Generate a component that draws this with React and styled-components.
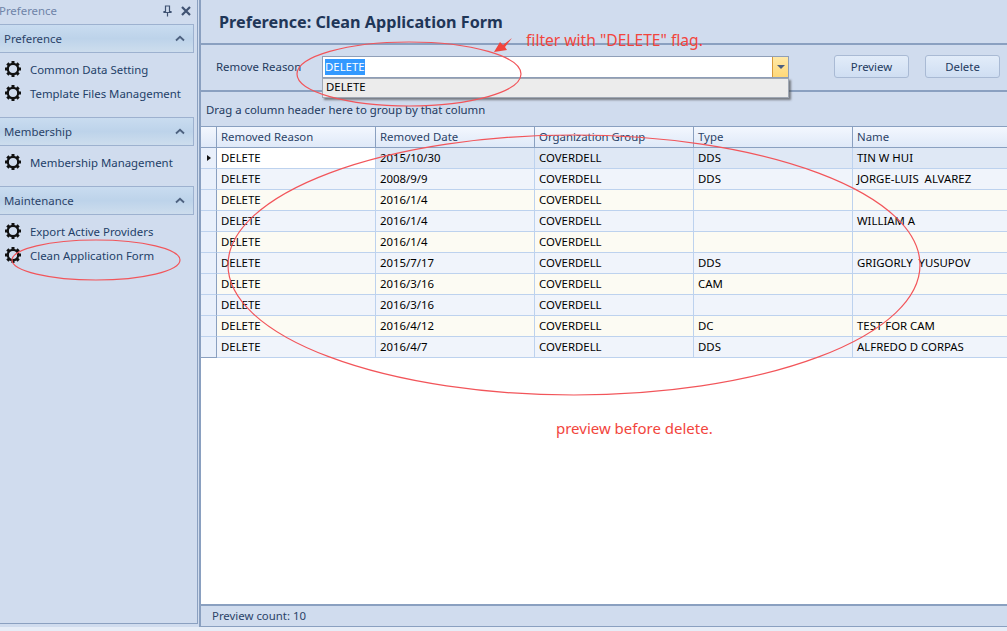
import styled, { createGlobalStyle } from "styled-components";

const GlobalStyle = createGlobalStyle`
  html, body {
    margin: 0;
    padding: 0;
    background: #e6edf7;
    overflow: hidden;
  }
  * { box-sizing: border-box; }
`;

const FONT = `"Noto Sans", "Open Sans", sans-serif`;
const LINE = "#8aa0c0";

const Page = styled.div`
  position: relative;
  width: 1007px;
  height: 631px;
  font-family: ${FONT};
  font-size: 11.4px;
  color: #233a5e;
  background: #e6edf7;
  overflow: hidden;
`;

const Body = styled.div`
  display: flex;
  height: 627px;
  background: #d0dcee;
`;

const Sidebar = styled.aside`
  width: 198px;
  height: 624px;
  flex: none;
  border-right: 1px solid ${LINE};
  border-bottom: 1px solid ${LINE};
  display: flex;
  flex-direction: column;
`;

const SideTitle = styled.div`
  height: 24px;
  display: flex;
  align-items: center;
  padding: 0 6px 3px 0;
  margin-left: -1px;
  color: #6f84a8;
  justify-content: space-between;
`;

const TitleIcons = styled.div`
  display: flex;
  align-items: center;
  gap: 9px;
`;

const SectionHead = styled.div`
  width: 194px;
  height: 29px;
  border: 1px solid #9db1cf;
  border-left: none;
  background: linear-gradient(#c9dcf0, #bdd3ea 50%, #cddded);
  display: flex;
  align-items: center;
  justify-content: space-between;
  padding: 0 8px 1px 4px;
  color: #2b4368;
`;

const SectionItems = styled.div`
  display: flex;
  flex-direction: column;
  gap: 2px;
  padding: 5px 0 0 4px;
  height: ${(p) => p.$height}px;
`;

const Item = styled.div`
  height: 22px;
  display: flex;
  align-items: center;
  gap: 8px;
  color: #233f68;
  white-space: nowrap;
`;

const Main = styled.main`
  flex: 1;
  margin-left: 1px;
  min-width: 0;
  height: 627px;
  display: flex;
  flex-direction: column;
  border-left: 2px solid ${LINE};
`;

const TitleBar = styled.div`
  height: 45px;
  flex: none;
  display: flex;
  align-items: center;
  padding: 0 0 0 18px;
  font-size: 16.2px;
  font-weight: 700;
  color: #1f3658;
  border-bottom: 2px solid ${LINE};
`;

const FilterBar = styled.div`
  height: 47px;
  flex: none;
  display: flex;
  align-items: center;
  padding: 0 8px 2px 15px;
  border-bottom: 2px solid ${LINE};
`;

const FilterLabel = styled.div`
  width: 106px;
  flex: none;
`;

const Combo = styled.div`
  position: relative;
  width: 467px;
  height: 22px;
  flex: none;
  margin: 1px 45px 0 0;
  display: flex;
  background: #fff;
  border: 1px solid #8f9fb8;
`;

const ComboText = styled.div`
  flex: 1;
  padding: 2px 0 0 2px;
`;

const Selected = styled.span`
  display: inline-block;
  height: 16px;
  line-height: 16px;
  background: #3399ff;
  color: #fff;
`;

const ComboButton = styled.div`
  width: 16px;
  background: linear-gradient(#ffe9a8, #ffd878);
  border-left: 1px solid #d89a3c;
  display: flex;
  align-items: center;
  justify-content: center;
`;

const Caret = styled.span`
  width: 0;
  height: 0;
  border-left: 4px solid transparent;
  border-right: 4px solid transparent;
  border-top: 4px solid #4c5f80;
`;

const Dropdown = styled.div`
  position: absolute;
  left: -1px;
  top: 21px;
  width: 467px;
  height: 20px;
  padding: 0 0 0 3px;
  background: #ececec;
  border: 1px solid #a0a8b4;
  box-shadow: 2px 2px 2px rgba(60, 60, 60, 0.6);
  color: #000;
  z-index: 2;
`;

const Button = styled.button`
  width: 75px;
  height: 23px;
  flex: none;
  margin-right: 16px;
  padding: 0 0 1px;
  font: inherit;
  color: #233a5e;
  border: 1px solid #a9bad4;
  border-radius: 3px;
  background: linear-gradient(#e2ecf9, #cfdef2);
`;

const GroupPanel = styled.div`
  height: 34px;
  flex: none;
  display: flex;
  align-items: center;
  padding: 0 0 0 5px;
  color: #233a5e;
`;

const Grid = styled.div`
  flex: 1;
  min-height: 0;
  background: #fff;
`;

const Row = styled.div`
  display: grid;
  grid-template-columns: 16px repeat(4, 159px) 1fr;
  height: ${(p) => (p.$head ? 22 : 21)}px;
`;

const HeadCell = styled.div`
  display: flex;
  align-items: center;
  padding: 0 0 2px 4px;
  background: linear-gradient(#f3f7fe, #dfe9f8);
  border-top: 1px solid ${LINE};
  border-bottom: 1px solid ${LINE};
  border-right: 1px solid ${LINE};
  color: #2b4368;
  &:last-child { border-right: none; }
`;

const Indicator = styled.div`
  display: flex;
  align-items: center;
  justify-content: center;
  background: #e9f0fb;
  border-right: 1px solid ${LINE};
  border-bottom: 1px solid ${(p) => (p.$last ? LINE : "#bdd2ee")};
`;

const RowArrow = styled.span`
  width: 0;
  height: 0;
  border-top: 3.5px solid transparent;
  border-bottom: 3.5px solid transparent;
  border-left: 4px solid #111;
`;

const Cell = styled.div`
  display: flex;
  align-items: center;
  padding: 0 0 2px 4px;
  white-space: pre;
  color: #000;
  background: ${(p) => p.$bg};
  border-right: 1px solid #bdd2ee;
  border-bottom: 1px solid #bdd2ee;
  &:last-child { border-right: none; }
`;

const StatusBar = styled.div`
  height: 23px;
  flex: none;
  display: flex;
  align-items: center;
  padding: 0 0 2px 11px;
  border-top: 2px solid ${LINE};
  border-bottom: 1px solid ${LINE};
  color: #2b4368;
`;

const Overlay = styled.svg`
  position: absolute;
  left: 0;
  top: 0;
  pointer-events: none;
  z-index: 3;
`;

const Note = styled.div`
  position: absolute;
  left: ${(p) => p.$x}px;
  top: ${(p) => p.$y}px;
  font-size: ${(p) => p.$size}px;
  line-height: 20px;
  white-space: nowrap;
  color: #f2453d;
  z-index: 4;
`;

function Gear() {
  const teeth = [0, 45, 90, 135, 180, 225, 270, 315];
  return (
    <svg width="18" height="18" viewBox="0 0 18 18" style={{ flex: "none" }}>
      {teeth.map((a) => (
        <rect key={a} x="7.5" y="1" width="3" height="3.5" fill="#111" transform={`rotate(${a} 9 9)`} />
      ))}
      <circle cx="9" cy="9" r="5.2" fill="none" stroke="#111" strokeWidth="2.2" />
    </svg>
  );
}

function Chevron() {
  return (
    <svg width="10" height="7" viewBox="0 0 10 7">
      <path d="M1 5.5 L5 1.8 L9 5.5" fill="none" stroke="#4d617f" strokeWidth="1.8" />
    </svg>
  );
}

const sections = [
  { title: "Preference", height: 64, items: ["Common Data Setting", "Template Files Management"] },
  { title: "Membership", height: 40, items: ["Membership Management"] },
  { title: "Maintenance", height: 64, items: ["Export Active Providers", "Clean Application Form"] },
];

const columns = ["Removed Reason", "Removed Date", "Organization Group", "Type", "Name"];

const rows = [
  ["2015/10/30", "DDS", "TIN W HUI"],
  ["2008/9/9", "DDS", "JORGE-LUIS  ALVAREZ"],
  ["2016/1/4", "", ""],
  ["2016/1/4", "", "WILLIAM A"],
  ["2016/1/4", "", ""],
  ["2015/7/17", "DDS", "GRIGORLY  YUSUPOV"],
  ["2016/3/16", "CAM", ""],
  ["2016/3/16", "", ""],
  ["2016/4/12", "DC", "TEST FOR CAM"],
  ["2016/4/7", "DDS", "ALFREDO D CORPAS"],
];

function rowColor(i) {
  if (i === 0) return "#dfe8f5";
  return i % 2 === 0 ? "#fcfbf3" : "#f0f4fb";
}

export default function App() {
  return (
    <Page>
      <GlobalStyle />
      <Body>
        <Sidebar>
          <SideTitle>
            Preference
            <TitleIcons>
              <svg width="9" height="12" viewBox="0 0 9 12">
                <path d="M2.5 1H6.5V6.5H8V7.5H1V6.5H2.5Z M4.5 7.5V11.5" fill="none" stroke="#3f5272" strokeWidth="1.2" />
              </svg>
              <svg width="10" height="10" viewBox="0 0 10 10">
                <path d="M1 1L9 9M9 1L1 9" stroke="#3f5272" strokeWidth="2.2" />
              </svg>
            </TitleIcons>
          </SideTitle>
          {sections.map((s) => (
            <div key={s.title}>
              <SectionHead>
                {s.title}
                <Chevron />
              </SectionHead>
              <SectionItems $height={s.height}>
                {s.items.map((name) => (
                  <Item key={name}>
                    <Gear />
                    {name}
                  </Item>
                ))}
              </SectionItems>
            </div>
          ))}
        </Sidebar>
        <Main>
          <TitleBar>Preference: Clean Application Form</TitleBar>
          <FilterBar>
            <FilterLabel>Remove Reason</FilterLabel>
            <Combo>
              <ComboText>
                <Selected>DELETE</Selected>
              </ComboText>
              <ComboButton>
                <Caret />
              </ComboButton>
              <Dropdown>DELETE</Dropdown>
            </Combo>
            <Button>Preview</Button>
            <Button>Delete</Button>
          </FilterBar>
          <GroupPanel>Drag a column header here to group by that column</GroupPanel>
          <Grid>
            <Row $head>
              <HeadCell />
              {columns.map((c) => (
                <HeadCell key={c}>{c}</HeadCell>
              ))}
            </Row>
            {rows.map((r, i) => (
              <Row key={i}>
                <Indicator $last={i === rows.length - 1}>{i === 0 && <RowArrow />}</Indicator>
                <Cell $bg={i === 0 ? "#fff" : rowColor(i)}>DELETE</Cell>
                <Cell $bg={rowColor(i)}>{r[0]}</Cell>
                <Cell $bg={rowColor(i)}>COVERDELL</Cell>
                <Cell $bg={rowColor(i)}>{r[1]}</Cell>
                <Cell $bg={rowColor(i)}>{r[2]}</Cell>
              </Row>
            ))}
          </Grid>
          <StatusBar>Preview count: 10</StatusBar>
        </Main>
      </Body>

      <Overlay width="1007" height="631" viewBox="0 0 1007 631">
        <g fill="none" stroke="#f2555a" strokeWidth="1.2">
          <ellipse cx="409" cy="74" rx="112" ry="32" />
          <ellipse cx="96" cy="260" rx="84" ry="20" />
          <ellipse cx="574" cy="265" rx="346" ry="130" />
        </g>
        <path d="M494 52 L500 42 L503 45 L512 38 L505 47 L507 50 Z" fill="#f2453d" />
      </Overlay>
      <Note $x={526} $y={30} $size={15.6}>filter with "DELETE" flag.</Note>
      <Note $x={556} $y={418} $size={15}>preview before delete.</Note>
    </Page>
  );
}
